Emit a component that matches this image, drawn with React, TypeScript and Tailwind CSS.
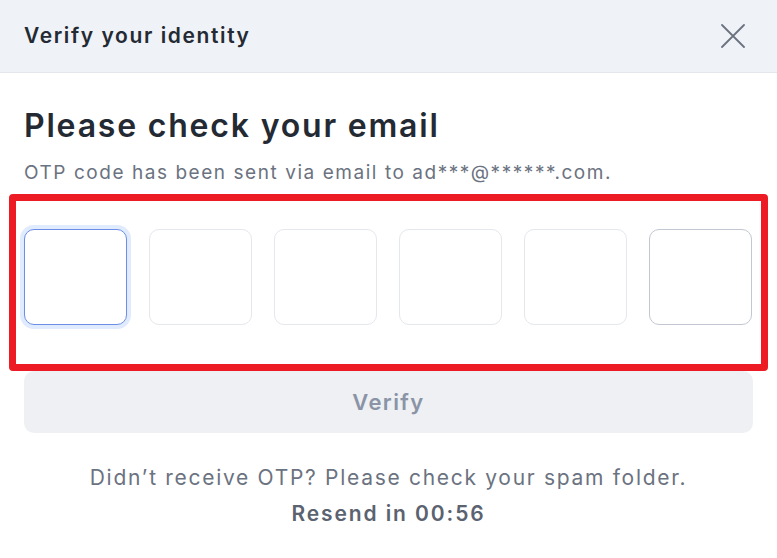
import React from 'react';

const OtpBox = ({ state }: { state: 'active' | 'idle' | 'hover' }) => {
  const cls =
    state === 'active'
      ? 'border-[#6c8ee6] ring-4 ring-[#e0ebfd]'
      : state === 'hover'
      ? 'border-[#c3c7d1]'
      : 'border-[#e4e7ec]';
  return <div className={`w-[103px] h-[96px] shrink-0 rounded-[10px] border-[1.5px] bg-white ${cls}`} />;
};

const App = () => {
  return (
    <div className="w-[777px] h-[558px] bg-white font-['Inter',sans-serif] overflow-hidden">
      {/* Header */}
      <div className="h-[73px] flex items-center justify-between pl-6 pr-[32px] bg-[#eff2f6] border-b border-[#e3e6eb]">
        <h2 className="text-[21px] font-semibold text-[#242a33] tracking-[1.6px]">Verify your identity</h2>
        <svg width="24" height="24" viewBox="0 0 24 24" className="text-[#6b7280]">
          <path d="M1 1 L23 23 M23 1 L1 23" stroke="currentColor" strokeWidth="1.8" strokeLinecap="round" />
        </svg>
      </div>

      {/* Body */}
      <div className="px-6 pt-[34px]">
        <h1 className="text-[32px] leading-[38px] font-semibold text-[#242a33] tracking-[1.8px]">Please check your email</h1>
        <p className="mt-[14px] text-[19px] leading-[28px] text-[#6b7280] tracking-[1.55px]">
          OTP code has been sent via email to ad***@******.com.
        </p>

        {/* OTP inputs */}
        <div className="-mx-[15px] mt-[7px] border-[7px] border-[#ed1c24] rounded-[4px] pl-2 pr-[10px] pt-[28px] pb-[39px]">
          <div className="flex gap-[22px]">
            <OtpBox state="active" />
            <OtpBox state="idle" />
            <OtpBox state="idle" />
            <OtpBox state="idle" />
            <OtpBox state="idle" />
            <OtpBox state="hover" />
          </div>
        </div>

        <button className="w-full h-[62px] rounded-[10px] bg-[#eef0f3] text-[22px] font-semibold text-[#8a94a6] tracking-[1.4px]">
          Verify
        </button>

        <div className="mt-[27px] text-center text-[21px] leading-[36px] tracking-[1.7px]">
          <p className="text-[#6b7280]">Didn’t receive OTP? Please check your spam folder.</p>
          <p className="font-semibold text-[#5b6270] tracking-[1.9px]">Resend in 00:56</p>
        </div>
      </div>
    </div>
  );
};

export default App;
